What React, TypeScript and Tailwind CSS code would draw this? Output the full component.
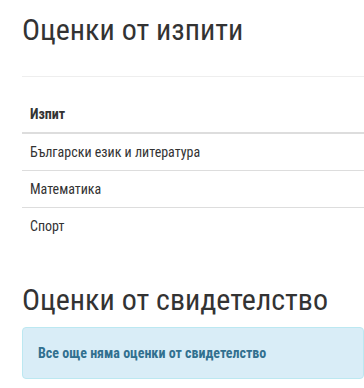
import React from "react";

const exams = ["Български език и литература", "Математика", "Спорт"];

const App = () => {
  return (
    <div
      className="w-[364px] h-[388px] overflow-hidden bg-white text-[#333] pl-[22px]"
      style={{ fontFamily: "Roboto, 'Liberation Sans', sans-serif", fontStretch: "condensed" }}
    >
      {/* Exam grades */}
      <h1 className="pt-[10px] text-[30px] leading-[40px] font-normal whitespace-nowrap">Оценки от изпити</h1>
      <div className="mt-[26px] border-t border-[#eee]" />

      <table className="mt-[19px] w-full border-collapse text-[14px] leading-[20px]">
        <thead>
          <tr>
            <th className="text-left font-bold px-2 py-2 border-b-2 border-[#ddd]">Изпит</th>
          </tr>
        </thead>
        <tbody>
          {exams.map((exam, i) => (
            <tr key={exam}>
              <td className={`px-2 py-2 ${i > 0 ? "border-t border-[#ddd]" : ""}`}>{exam}</td>
            </tr>
          ))}
        </tbody>
      </table>

      {/* Certificate grades */}
      <h1 className="mt-[36px] text-[30px] leading-[40px] font-normal whitespace-nowrap">Оценки от свидетелство</h1>
      <div className="mt-[7px] rounded border border-[#bce8f1] bg-[#d9edf7] px-[15px] py-[15px] text-[14px] leading-[20px] font-bold text-[#31708f] whitespace-nowrap">
        Все още няма оценки от свидетелство
      </div>
    </div>
  );
};

export default App;
